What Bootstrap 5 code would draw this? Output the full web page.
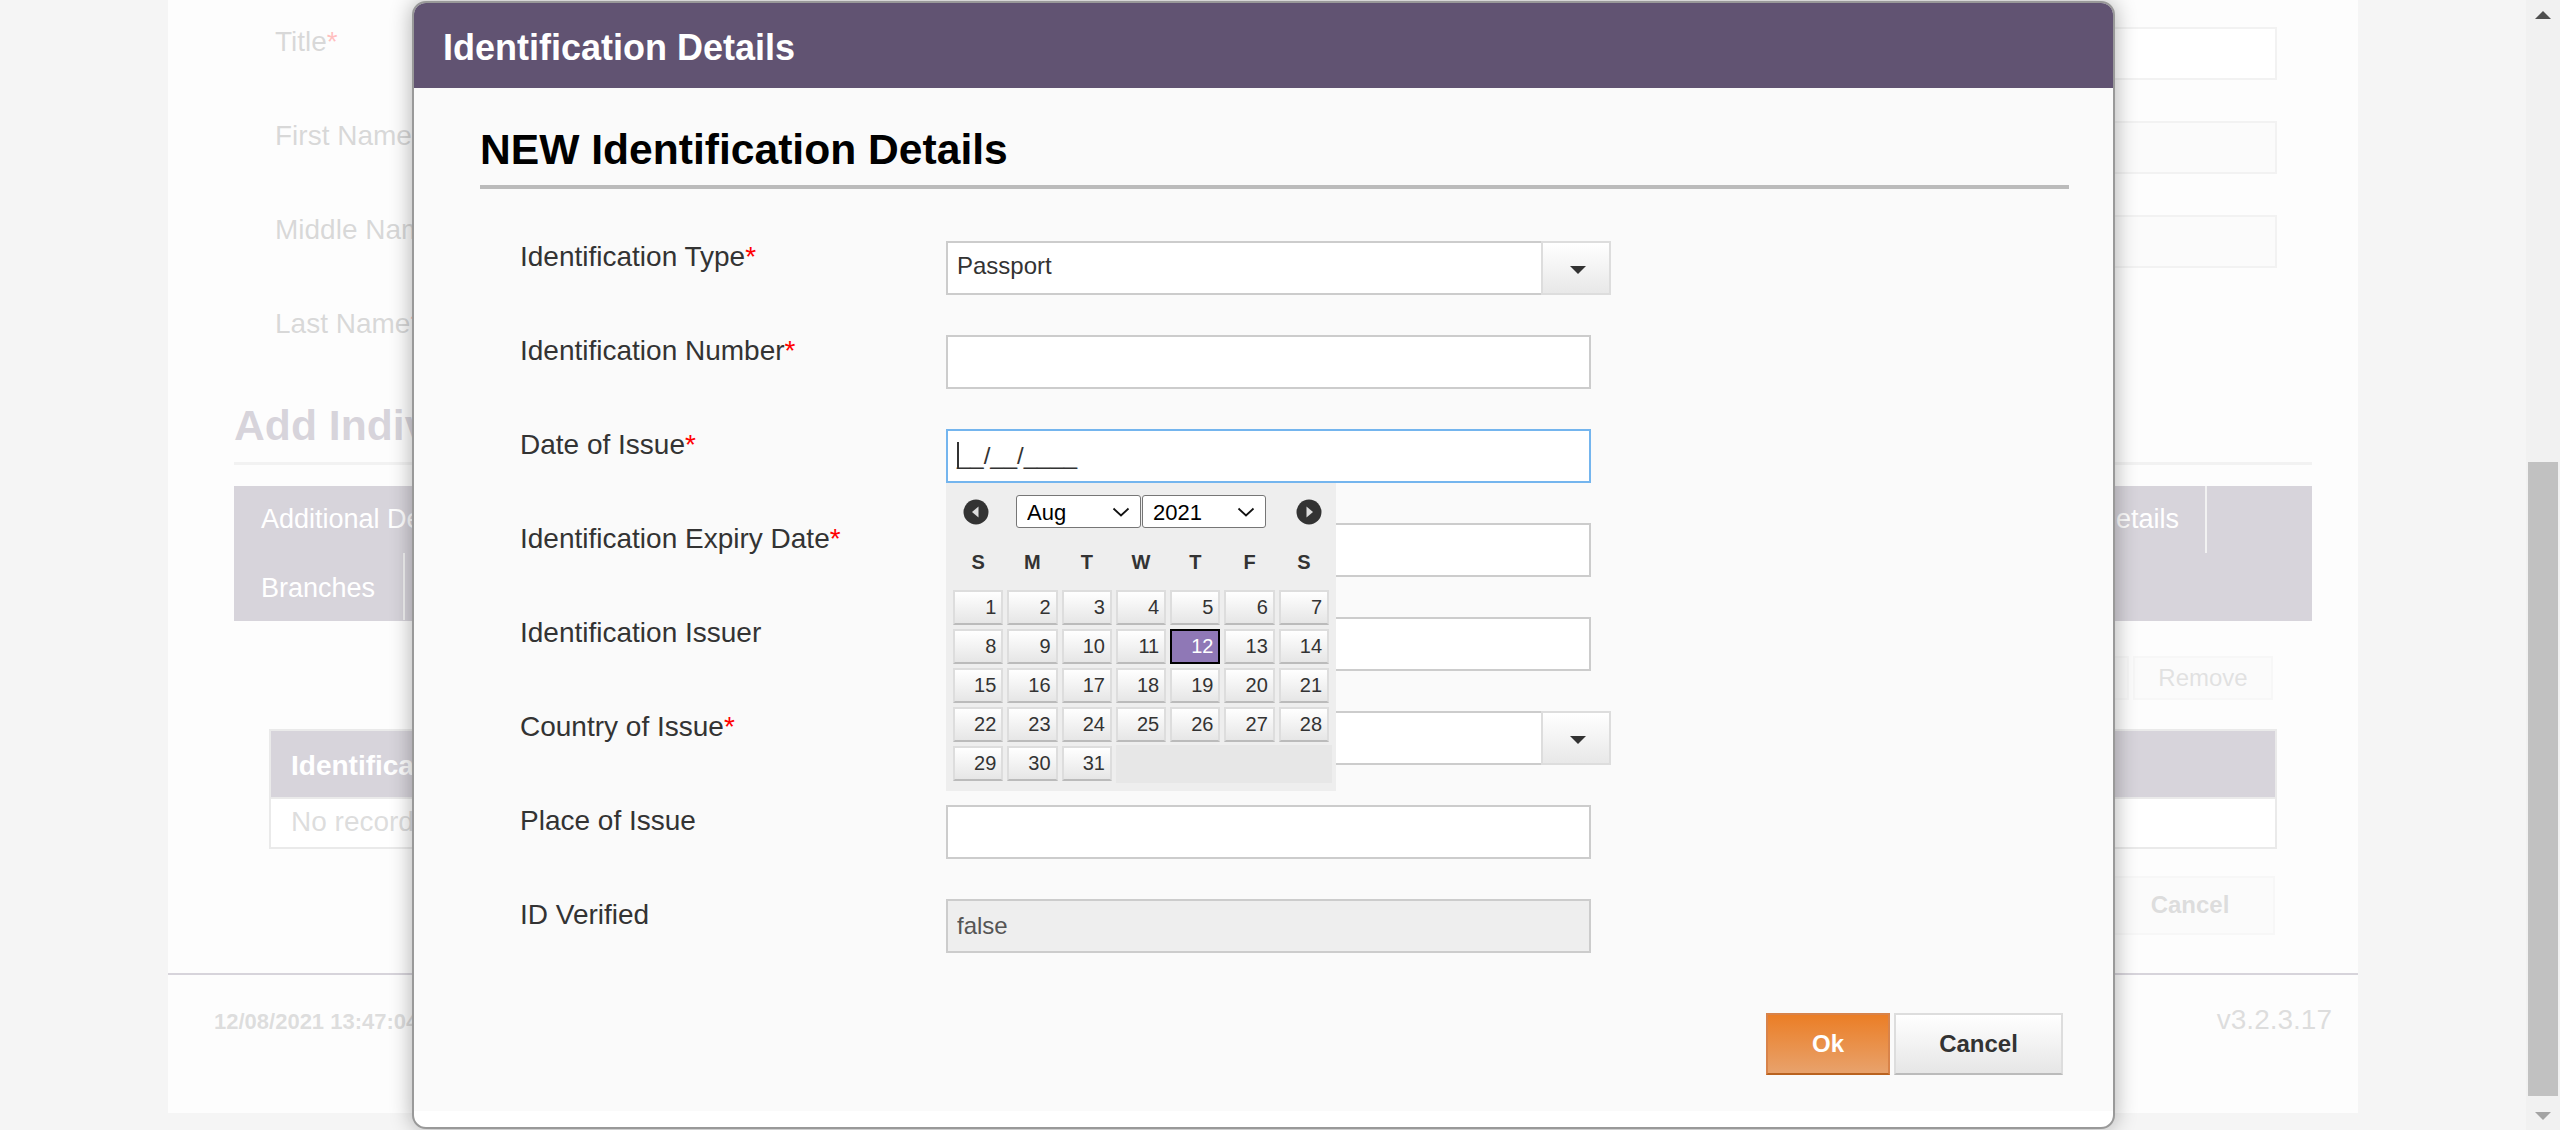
<!DOCTYPE html>
<html lang="en">
<head>
<meta charset="UTF-8">
<title>Identification Details</title>
<link href="https://cdn.jsdelivr.net/npm/bootstrap@5.3.0/dist/css/bootstrap.min.css" rel="stylesheet">
<script src="https://cdn.jsdelivr.net/npm/bootstrap@5.3.0/dist/js/bootstrap.bundle.min.js"></script>
<style>
    html, body { height: 1130px; overflow: hidden; }
    body { font-family: "Liberation Sans", Arial, sans-serif; font-size: 28px; color: #333; background: #d8d8d8; }
    .req { color: #f00; }

    /* page behind the dialog */
    .page-area { width: 2526px; height: 1130px; position: relative; overflow: hidden; }
    .sheet { width: 2190px; height: 1113px; margin-left: 168px; background: #f8f8f8; padding-top: 27px; }
    .bg-row { height: 94px; padding-left: 107px; padding-right: 81px; color: #666; line-height: 29px; }
    .bg-input { width: 1500px; height: 53px; background: #fff; border: 2px solid #ccc; }
    .bg-input.off { background: #eee; }
    .bg-req { color: #f00; }
    .bg-heading { margin: 0 46px 0 66px; height: 63px; border-bottom: 3px solid #ccc; font-size: 42.7px; font-weight: 700; line-height: 46px; color: #615372; }
    .tabbar { margin: 21px 46px 0 66px; height: 135px; background: #615372; color: #fff; font-size: 27px; }
    .tabrow { height: 67px; padding-right: 105px; }
    .tabitem { padding: 0 28px 0 27px; line-height: 67px; border-right: 2px solid #ccc; height: 67px; }
    .tabitem-end { padding-right: 26px; }
    .tabitem-low { line-height: 71px; }
    .bg-actions { margin: 35px 85px 0 0; height: 44px; gap: 4px; }
    .bg-btn { width: 140px; height: 44px; border: 2px solid #ddd; background: #eee; color: #888; font-size: 24px; text-align: center; line-height: 40px; }
    .bg-table { margin: 29px 81px 0 101px; border: 2px solid #aaa; }
    .bg-table-head { height: 68px; background: #615372; color: #fff; font-weight: 700; padding-left: 20px; line-height: 70px; border-bottom: 2px solid #aaa; }
    .bg-table-row { height: 48px; padding-left: 20px; line-height: 46px; color: #777; background: #fff; }
    .bg-cancel { margin: 27px 83px 0 0; width: 170px; height: 59px; border: 2px solid #ddd; background: #eee; color: #777; font-size: 24px; font-weight: 700; text-align: center; line-height: 54px; }
    .bg-footer { margin-top: 38px; border-top: 2px solid #615372; height: 140px; padding: 32px 26px 0 46px; }
    .bg-date { font-size: 22px; font-weight: 700; color: #777; line-height: 30px; }
    .bg-ver { color: #777; line-height: 26px; }
    .backdrop { position: absolute; inset: 0; background: rgba(255,255,255,.75); }

    /* scrollbar */
    .fake-scroll { width: 34px; height: 1130px; background: #f1f1f1; position: relative; }
    .scroll-thumb { width: 30px; height: 634px; margin: 462px 0 0 2px; background: #c1c1c1; }
    .arr-up, .arr-down { position: absolute; left: 9px; width: 0; height: 0; border-left: 8px solid transparent; border-right: 8px solid transparent; }
    .arr-up { top: 11px; border-bottom: 8px solid #505050; }
    .arr-down { bottom: 10px; border-top: 8px solid #a3a3a3; }

    /* dialog */
    .id-dialog { position: absolute; left: 412px; top: 1px; width: 1703px; height: 1128px; border: 2px solid #999; border-radius: 14px; background: #fff; box-shadow: 0 0 22px rgba(0,0,0,.32); overflow: hidden; }
    .id-head { height: 85px; background: #615372; color: #fff; font-size: 36px; font-weight: 700; padding-left: 29px; line-height: 90px; }
    .id-body { height: 1023px; background: #fafafa; padding: 0 44px 0 66px; position: relative; }
    .id-title { margin: 0; height: 101px; font-size: 42.6px; font-weight: 700; color: #000; border-bottom: 4px solid #bbb; line-height: 123px; }
    .id-form { padding-top: 52px; }
    .id-row { height: 94px; padding-left: 40px; }
    .id-label { width: 426px; line-height: 30px; color: #333; margin-top: 1px; }
    .id-input { width: 645px; height: 54px; border: 2px solid #ccc; border-radius: 0; padding: 0 9px; font-size: 24px; color: #333; background: #fff; box-shadow: none; }
    .id-input[disabled] { background: #eee; color: #555; opacity: 1; }
    .id-focus { border-color: #74b5ee; display: flex; align-items: center; }
    .id-caret { display: inline-block; width: 2px; height: 26px; background: #333; margin-right: -2px; position: relative; top: -1px; }
    .id-sel { width: 665px; height: 54px; }
    .id-sel .id-input { width: 595px; border-right: 0; line-height: 45px; }
    .id-sel-btn { width: 70px; height: 54px; padding: 0 0 0 3px; border: 2px solid #ddd; border-radius: 0; background: linear-gradient(#fff, #e8e8e8); }
    .tri-down { display: block; margin: 4px auto 0; width: 0; height: 0; border-left: 8px solid transparent; border-right: 8px solid transparent; border-top: 8px solid #333; }
    .id-ok, .id-cancel { height: 62px; border-radius: 0; font-size: 24px; font-weight: 700; padding: 0; }
    .id-ok { width: 124px; color: #fff; border: 2px solid #d8834a; border-bottom-color: #b9621f; background: linear-gradient(#eb7e26, #e8a26c); }
    .id-cancel { width: 169px; color: #333; border: 2px solid #ddd; border-bottom-color: #bbb; background: linear-gradient(#fff, #e6e6e6); }
    .id-buttons { position: absolute; right: 50px; top: 925px; gap: 4px; }

    /* calendar */
    .cal { position: absolute; left: 946px; top: 483px; width: 390px; height: 308px; background: #eee; padding: 12px 7px 0; z-index: 5; }
    .cal-nav { height: 33px; padding: 0 7px 0 10px; }
    .cal-arrow { width: 26px; height: 26px; flex: none; }
    .cal-sel { appearance: none; font-family: "Liberation Sans", Arial, sans-serif; font-size: 22px; height: 33px; width: 125px; padding: 0 4px 0 10px; border: 1.5px solid #767676; border-radius: 3px; color: #000; background: #fff url("data:image/svg+xml,%3Csvg xmlns='http://www.w3.org/2000/svg' width='18' height='10'%3E%3Cpath d='M1.5 1.5 9 8.5l7.5-7' fill='none' stroke='%23111' stroke-width='1.8'/%3E%3C/svg%3E") no-repeat right 10px center; }
    .cal-sel.first { margin-left: 27px; margin-right: 1px; }
    .cal-sel.second { width: 124px; margin-right: auto; }
    .cal-days, .cal-grid { display: grid; grid-template-columns: repeat(7, 50.3px); column-gap: 4px; }
    .cal-days { margin-top: 17px; height: 45px; font-size: 20px; font-weight: 700; text-align: center; line-height: 34px; color: #333; }
    .cal-grid { row-gap: 4px; grid-auto-rows: 35px; position: relative; }
    .cal-d { border: 2px solid #ddd; border-bottom-color: #bbb; background: linear-gradient(#fff, #e6e6e6); text-align: right; font-size: 20px; line-height: 30px; padding-right: 5px; color: #333; }
    .cal-d.sel { background: #8f78b6; border: 2px solid #000; color: #fff; }
    .cal-empty { grid-column: 4 / 8; background: #e7e7e7; margin: -1px -3px -2px 0; }
</style>
</head>
<body class="d-flex">
    <div class="page-area">
        <div class="sheet d-flex flex-column">
            <div class="bg-row d-flex justify-content-between"><span>Title<span class="bg-req">*</span></span><div class="bg-input"></div></div>
            <div class="bg-row d-flex justify-content-between"><span>First Name<span class="bg-req">*</span></span><div class="bg-input off"></div></div>
            <div class="bg-row d-flex justify-content-between"><span>Middle Name</span><div class="bg-input off"></div></div>
            <div class="bg-row d-flex justify-content-between"><span>Last Name<span class="bg-req">*</span></span></div>
            <div class="bg-heading">Add Individual</div>
            <div class="tabbar">
                <div class="tabrow d-flex justify-content-between">
                    <span class="tabitem">Additional Details</span>
                    <span class="tabitem tabitem-end">Bank Details</span>
                </div>
                <div class="tabrow d-flex"><span class="tabitem tabitem-low">Branches</span></div>
            </div>
            <div class="bg-actions d-flex justify-content-end">
                <div class="bg-btn">Edit</div>
                <div class="bg-btn">Remove</div>
            </div>
            <div class="bg-table">
                <div class="bg-table-head">Identification Type</div>
                <div class="bg-table-row">No records found</div>
            </div>
            <div class="d-flex justify-content-end"><div class="bg-cancel">Cancel</div></div>
            <div class="bg-footer d-flex justify-content-between">
                <span class="bg-date">12/08/2021 13:47:04</span>
                <span class="bg-ver">v3.2.3.17</span>
            </div>
        </div>
        <div class="backdrop"></div>
    </div>

    <div class="fake-scroll">
        <div class="arr-up"></div>
        <div class="scroll-thumb"></div>
        <div class="arr-down"></div>
    </div>

    <div class="id-dialog">
        <div class="id-head">Identification Details</div>
        <div class="id-body">
            <h2 class="id-title">NEW Identification Details</h2>
            <form class="id-form">
                <div class="id-row d-flex">
                    <label class="id-label">Identification Type<span class="req">*</span></label>
                    <div class="id-sel d-flex">
                        <div class="id-input">Passport</div>
                        <button type="button" class="btn id-sel-btn"><span class="tri-down"></span></button>
                    </div>
                </div>
                <div class="id-row d-flex">
                    <label class="id-label">Identification Number<span class="req">*</span></label>
                    <input class="id-input" type="text">
                </div>
                <div class="id-row d-flex">
                    <label class="id-label">Date of Issue<span class="req">*</span></label>
                    <div class="id-input id-focus"><span class="id-caret"></span>__/__/____</div>
                </div>
                <div class="id-row d-flex">
                    <label class="id-label">Identification Expiry Date<span class="req">*</span></label>
                    <input class="id-input" type="text">
                </div>
                <div class="id-row d-flex">
                    <label class="id-label">Identification Issuer</label>
                    <input class="id-input" type="text">
                </div>
                <div class="id-row d-flex">
                    <label class="id-label">Country of Issue<span class="req">*</span></label>
                    <div class="id-sel d-flex">
                        <div class="id-input"></div>
                        <button type="button" class="btn id-sel-btn"><span class="tri-down"></span></button>
                    </div>
                </div>
                <div class="id-row d-flex">
                    <label class="id-label">Place of Issue</label>
                    <input class="id-input" type="text">
                </div>
                <div class="id-row d-flex">
                    <label class="id-label">ID Verified</label>
                    <input class="id-input" type="text" value="false" disabled>
                </div>
            </form>
            <div class="id-buttons d-flex">
                <button type="button" class="btn id-ok">Ok</button>
                <button type="button" class="btn id-cancel">Cancel</button>
            </div>
        </div>
    </div>

    <div class="cal">
        <div class="cal-nav d-flex align-items-center">
            <svg class="cal-arrow" viewBox="0 0 26 26"><circle cx="13" cy="13" r="12.5" fill="#333"/><path d="M15.5 7.5v11L9 13z" fill="#ddd"/></svg>
            <select class="cal-sel first"><option>Aug</option></select>
            <select class="cal-sel second"><option>2021</option></select>
            <svg class="cal-arrow" viewBox="0 0 26 26"><circle cx="13" cy="13" r="12.5" fill="#333"/><path d="M10.5 7.5v11L17 13z" fill="#ddd"/></svg>
        </div>
        <div class="cal-days"><span>S</span><span>M</span><span>T</span><span>W</span><span>T</span><span>F</span><span>S</span></div>
        <div class="cal-grid" id="calGrid"></div>
    </div>

    <script>
        // build the days of the month
        const grid = document.getElementById('calGrid');
        let html = '';
        for (let d = 1; d <= 31; d++) {
            html += `<div class="cal-d${d === 12 ? ' sel' : ''}">${d}</div>`;
        }
        grid.innerHTML = html + '<div class="cal-empty"></div>';
    </script>
</body>
</html>
